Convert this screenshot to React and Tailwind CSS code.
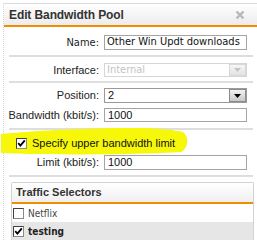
import React from "react";

const Box = ({ checked }) => (
  <svg width="11" height="11" viewBox="0 0 11 11" className="shrink-0">
    <rect x="0.5" y="0.5" width="10" height="10" fill="#fff" stroke="#8a8a8a" />
    <path d="M0.5 10.5 V0.5 H10.5" fill="none" stroke="#404040" />
    {checked && <path d="M2.2 5.2 L4.4 7.6 L8.8 2.4" fill="none" stroke="#000" strokeWidth="1.8" />}
  </svg>
);

const Arrow = ({ disabled }) => (
  <div
    className={
      "absolute right-[1px] top-[1px] bottom-[1px] w-[17px] flex items-center justify-center border " +
      (disabled
        ? "border-[#d8d8d8] bg-gradient-to-b from-[#f6f6f6] to-[#e2e2e2]"
        : "border-[#8c8c8c] bg-gradient-to-b from-[#f2f2f2] to-[#c9c9c9]")
    }>
    <svg width="7" height="4" viewBox="0 0 7 4">
      <path d="M0 0 H7 L3.5 4 Z" fill={disabled ? "#c4c4c4" : "#000"} />
    </svg>
  </div>
);

const Row = ({ label, children, className = "" }) => (
  <div className={"flex items-center " + className}>
    <div className="w-[97px] text-right pr-[2px] text-[11px] leading-none text-[#222] whitespace-nowrap">{label}</div>
    <div className="relative ml-[3px] w-[143px]">{children}</div>
  </div>
);

const Line = ({ className = "" }) => <div className={"ml-[5px] w-[244px] h-[2px] bg-[#dedede] " + className}></div>;

export default function App() {
  return (
    <div className="w-[257px] h-[240px] bg-white overflow-hidden relative font-['Liberation_Sans',Arial,sans-serif]">
      <div className="mt-[3px] ml-[3px] h-[237px] border-l border-dotted border-[#d6d6d6]">
        <div className="h-[24px] flex items-center justify-between pl-[5px] pr-[12px] bg-gradient-to-b from-white to-[#ececec] border-t border-[#dadada] border-b-2 border-b-[#f28c00]">
          <span className="text-[12px] font-bold text-[#333] tracking-[-0.1px]">Edit Bandwidth Pool</span>
          <svg width="10" height="10" viewBox="0 0 10 10">
            <path d="M1.5 1.5 L8.5 8.5 M8.5 1.5 L1.5 8.5" stroke="#b8b8b8" strokeWidth="2.4" />
          </svg>
        </div>

        <Row label={<span className="font-['DejaVu_Sans_Condensed','DejaVu_Sans',sans-serif] text-[11px]">Name:</span>} className="mt-[8px]">
          <div className="h-[15px] border border-[#a4a4a4] flex items-center pl-[2px] text-[11px] font-['DejaVu_Sans_Condensed','DejaVu_Sans',sans-serif] text-[#111] whitespace-nowrap overflow-hidden">
            Other Win Updt downloads
          </div>
        </Row>
        <Line className="mt-[5px]" />

        <Row label="Interface:" className="mt-[6px]">
          <div className="h-[14px] border border-[#d6d6d6] flex items-center pl-[2px] text-[11px] font-['DejaVu_Sans_Condensed','DejaVu_Sans',sans-serif] text-[#c4c4c4]">
            Internal
          </div>
          <Arrow disabled />
        </Row>
        <Line className="mt-[4px]" />

        <Row label="Position:" className="mt-[5px]">
          <div className="h-[15px] border border-[#9a9a9a] flex items-center pl-[3px] text-[11px] text-[#111]">2</div>
          <Arrow />
        </Row>
        <Row label="Bandwidth (kbit/s):" className="mt-[5px]">
          <div className="h-[14px] border border-[#a4a4a4] flex items-center pl-[3px] text-[11px] text-[#111]">1000</div>
        </Row>
        <Line className="mt-[6px]" />

        <div className="relative h-[22px] mt-[2px]">
          <svg className="absolute left-[-3px] top-[-4px]" width="190" height="28" viewBox="0 0 190 28">
            <path
              d="M0 6 C30 3 70 1 110 0 C140 -1 170 1 182 4 C188 8 188 20 180 24 C150 26 80 27 30 26 L0 25 Z"
              fill="#f7f70a"
            />
          </svg>
          <div className="relative flex items-center h-full pl-[12px] gap-[5px]">
            <Box checked />
            <span className="text-[11px] text-[#111] leading-none">Specify upper bandwidth limit</span>
          </div>
        </div>
        <Row label="Limit (kbit/s):" className="mt-[1px]">
          <div className="h-[15px] border border-[#a4a4a4] flex items-center pl-[3px] text-[11px] text-[#111]">1000</div>
        </Row>
        <Line className="mt-[5px]" />

        <div className="mt-[5px] ml-[7px] w-[243px] h-[60px] border border-[#d2d2d2] border-b-0 rounded-t-[2px] overflow-hidden">
          <div className="h-[21px] flex items-center pl-[4px] bg-gradient-to-b from-white to-[#f0f0f0] border-b-2 border-b-[#f28c00]">
            <span className="text-[11px] font-bold text-[#333]">Traffic Selectors</span>
          </div>
          <div className="h-[18px] flex items-center pl-[1px] gap-[4px]">
            <Box />
            <span className="text-[10px] text-[#444] font-['DejaVu_Sans_Condensed','DejaVu_Sans',sans-serif]">Netflix</span>
          </div>
          <div className="h-[18px] flex items-center pl-[1px] gap-[4px] bg-[#e6e6e6]">
            <Box checked />
            <span className="text-[10px] font-bold text-[#222] font-['DejaVu_Sans_Condensed','DejaVu_Sans',sans-serif]">testing</span>
          </div>
        </div>
      </div>
    </div>
  );
}
